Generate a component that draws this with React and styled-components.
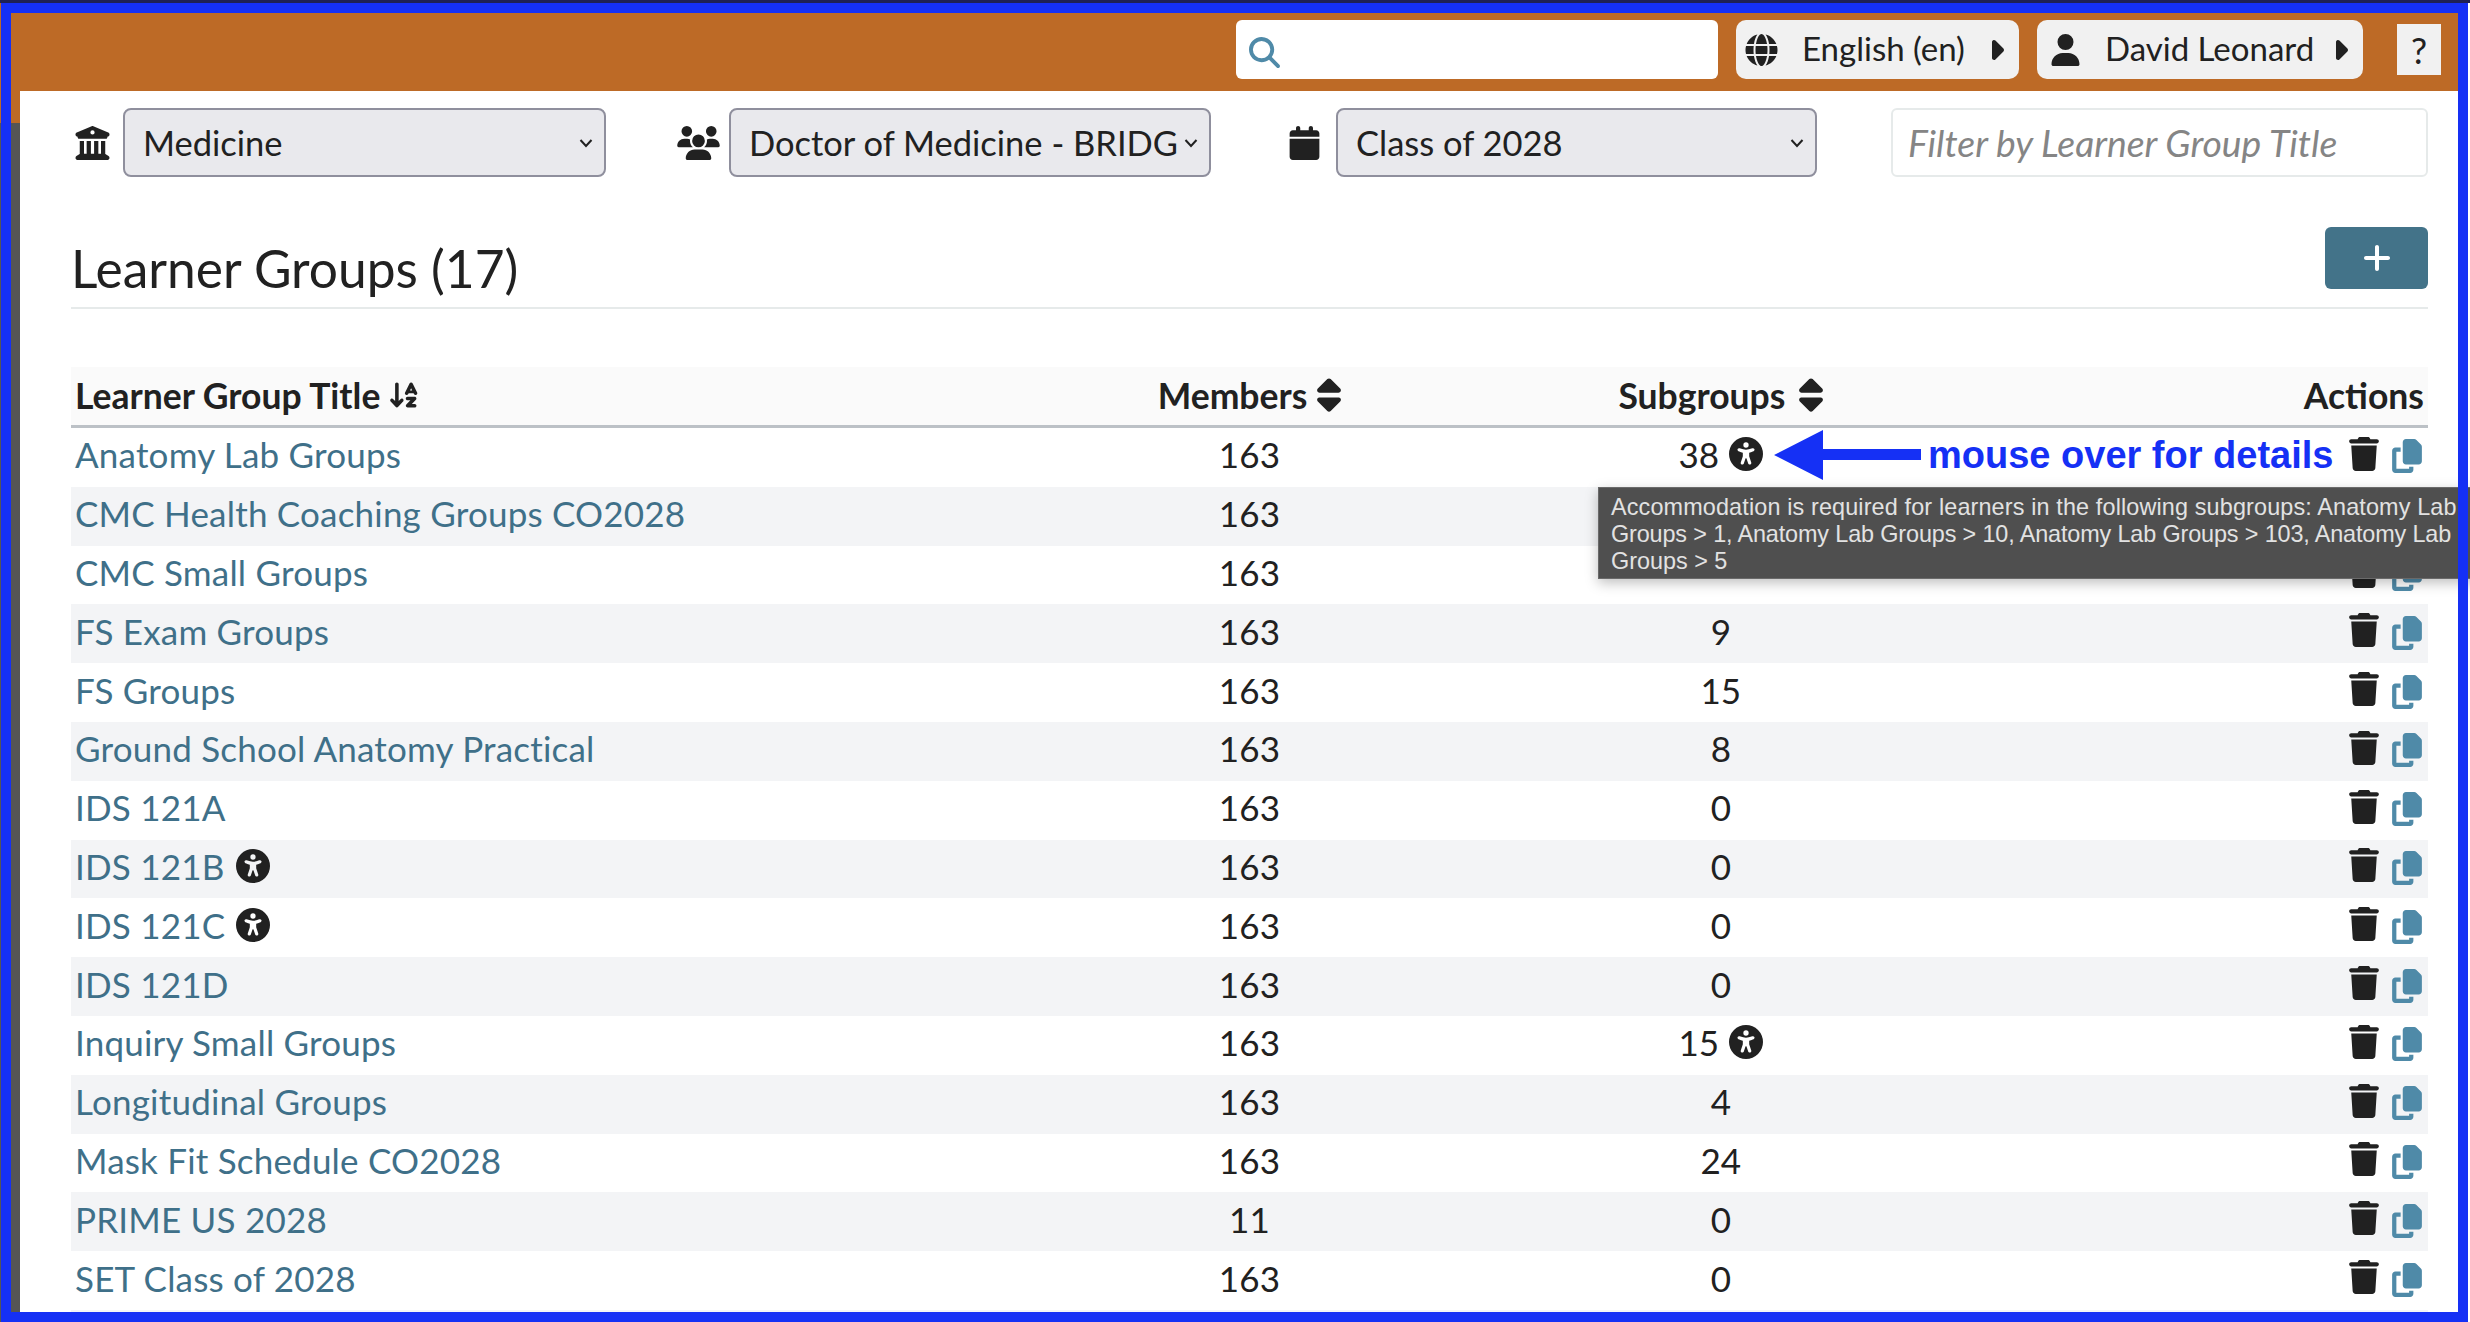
import React from 'react'
import styled, { createGlobalStyle } from 'styled-components'
import {
  FaArrowDownAZ, FaBuildingColumns, FaCalendar, FaCaretRight, FaCopy, FaGlobe,
  FaMagnifyingGlass, FaPlus, FaSort, FaTrash, FaUniversalAccess, FaUser, FaUsers,
} from 'react-icons/fa6'

const fontMain = 'Lato, "Open Sans", sans-serif'
const fontTip = '"Liberation Sans", Arial, sans-serif'
const ink = '#212121'
const link = '#3f7089'
const iconBlue = '#4f8aa8'
const frameBlue = '#1530f5'
const orange = '#bd6a26'

const GlobalStyle = createGlobalStyle`
  html, body { margin: 0; padding: 0; background: #fff; }
  * { box-sizing: border-box; }
`

const Page = styled.div`
  position: relative;
  width: 2470px;
  height: 1322px;
  padding: 3px 2px 0 1px;
  overflow: hidden;
  background:
    linear-gradient(#1f2154 3px, ${orange} 3px, ${orange} 123px, #555 123px) 0 0 / 1px 100% no-repeat,
    linear-gradient(#1f2154 3px, #fff 3px);
  font-family: ${fontMain};
  color: ${ink};
`

const Frame = styled.div`
  position: relative;
  display: flex;
  flex-direction: column;
  height: 100%;
  border-style: solid;
  border-color: ${frameBlue};
  border-width: 10px;
  overflow: hidden;
`

// right side of the frame, has to stay above the tooltip
const FrameEdge = styled.div`
  position: absolute;
  top: 3px;
  bottom: 0;
  left: 2458px;
  z-index: 3;
  width: 10px;
  background: ${frameBlue};
`

const TopBar = styled.header`
  display: flex;
  flex: none;
  align-items: flex-start;
  justify-content: flex-end;
  height: 78px;
  padding: 7px 17px 0 0;
  background: ${orange};
`

const SearchBox = styled.div`
  display: flex;
  align-items: center;
  width: 482px;
  height: 59px;
  margin-right: 18px;
  padding: 6px 0 0 13px;
  border-radius: 6px;
  background: #fff;
  color: ${iconBlue};
  font-size: 31px;
`

const MenuButton = styled.div`
  display: flex;
  align-items: center;
  width: ${p => p.$width}px;
  height: 59px;
  margin-right: ${p => p.$gap}px;
  padding-left: ${p => p.$pad}px;
  border-radius: 10px;
  background: #f1f1f1;
  font-size: 33px;
  white-space: nowrap;

  svg:first-child { flex: none; width: 33px; height: 32px; }
  svg:last-child { flex: none; width: 16px; height: 32px; margin-left: auto; margin-right: 15px; }
`

const MenuLabel = styled.span`
  margin-left: ${p => p.$left}px;
  margin-bottom: 3px;
`

const HelpButton = styled.div`
  display: flex;
  align-items: center;
  justify-content: center;
  width: 44px;
  height: 51px;
  margin-top: 4px;
  background: #f1f1f1;
  font-size: 36px;
`

const Body = styled.div`
  display: flex;
  flex: 1;
  min-height: 0;
`

const SideStrip = styled.div`
  flex: none;
  width: 9px;
  background: linear-gradient(${orange} 32px, #555 32px);
`

const Content = styled.main`
  flex: 1;
  min-width: 0;
  padding: 17px 30px 0 51px;
`

const FilterRow = styled.div`
  display: flex;
  align-items: center;
  height: 69px;
`

const FilterIcon = styled.span`
  display: flex;
  flex: none;
  justify-content: center;
  width: ${p => p.$width}px;
  margin-left: ${p => p.$left}px;
  margin-right: ${p => p.$right}px;

  svg { width: 100%; height: 34px; }
`

const SelectBox = styled.div`
  display: flex;
  flex: none;
  align-items: center;
  width: ${p => p.$width}px;
  height: 69px;
  padding: 0 11px 0 18px;
  border: 2px solid #8f8f9d;
  border-radius: 8px;
  background: #e9e9ed;
  font-size: 34.5px;
  white-space: nowrap;
`

const SelectText = styled.span`
  flex: 1;
  min-width: 0;
`

const Chevron = styled.svg`
  flex: none;
  width: 14px;
  height: 10px;
  margin-left: 6px;
`

const FilterInput = styled.div`
  display: flex;
  align-items: center;
  width: 537px;
  height: 69px;
  margin-left: auto;
  padding-left: 15px;
  border: 2px solid #e6eaea;
  border-radius: 6px;
  color: #858585;
  font-size: 37.3px;
  font-style: italic;
`

const TitleRow = styled.div`
  display: flex;
  align-items: flex-end;
  justify-content: space-between;
  height: 132px;
  padding-bottom: 18px;
  border-bottom: 2px solid #e6eaea;
`

const Title = styled.h2`
  margin: 0 0 -9px;
  font-size: 51.5px;
  font-weight: 400;
  line-height: 60px;
`

const AddButton = styled.div`
  display: flex;
  align-items: center;
  justify-content: center;
  width: 103px;
  height: 62px;
  border-radius: 6px;
  background: #437389;
  color: #fff;
  font-size: 32px;
`

const Table = styled.div`
  margin-top: 58px;
`

const HeadRow = styled.div`
  display: grid;
  grid-template-columns: 40% 20% 20% 20%;
  align-items: center;
  height: 61px;
  padding-bottom: 2px;
  border-bottom: 3px solid #bcc1c6;
  background: #fafafa;
  font-size: 35.5px;
  font-weight: 700;
`

const Row = styled.div`
  display: grid;
  grid-template-columns: 40% 20% 20% 20%;
  align-items: center;
  height: 58.8px;
  background: ${p => (p.$striped ? '#f3f4f6' : '#fff')};
  font-size: 35px;
  letter-spacing: 0.2px;
`

const Cell = styled.div`
  display: flex;
  align-items: center;
  justify-content: ${p => p.$align || 'center'};
  gap: ${p => p.$gap || 10}px;
  padding: 0 ${p => (p.$align ? '4px' : '0')} ${p => p.$lift || 0}px;
  white-space: nowrap;
`

const GroupLink = styled.span`
  color: ${link};
`

const AccessIcon = styled(FaUniversalAccess)`
  flex: none;
  width: 34px;
  height: 34px;
`

const SortIcon = styled(FaSort)`
  flex: none;
  width: 24px;
  height: 38px;
`

const AlphaIcon = styled(FaArrowDownAZ)`
  flex: none;
  width: 32px;
  height: 32px;
`

const TrashIcon = styled(FaTrash)`
  width: 30px;
  height: 34px;
  margin-bottom: 7px;
`

const CopyIcon = styled(FaCopy)`
  width: 30px;
  height: 34px;
  margin-bottom: 2px;
  color: ${iconBlue};
`

const ActionCell = styled.div`
  display: flex;
  align-items: center;
  justify-content: flex-end;
  gap: 13px;
  padding-right: 6px;
`

const Tooltip = styled.div`
  position: absolute;
  left: 1598px;
  top: 487px;
  z-index: 2;
  width: 900px;
  height: 92px;
  padding: 6px 12px;
  border: 1px solid #6a6a6a;
  background: #4f4f4f;
  box-shadow: 0 4px 12px rgba(0, 0, 0, 0.25);
  color: #e2e2e2;
  font-family: ${fontTip};
  font-size: 23.4px;
  line-height: 27px;
`

const TipLine = styled.div`
  letter-spacing: ${p => p.$spacing || 0}px;
  white-space: nowrap;
`

const Callout = styled.div`
  position: absolute;
  left: 1763px;
  top: 417px;
  display: flex;
  align-items: center;
  gap: 7px;
  color: ${frameBlue};
  font-family: ${fontTip};
  font-size: 38px;
  font-weight: 700;
  white-space: nowrap;
`

const groups = [
  ['Anatomy Lab Groups', '163', '38', false, true],
  ['CMC Health Coaching Groups CO2028', '163', '', false, false],
  ['CMC Small Groups', '163', '', false, false],
  ['FS Exam Groups', '163', '9', false, false],
  ['FS Groups', '163', '15', false, false],
  ['Ground School Anatomy Practical', '163', '8', false, false],
  ['IDS 121A', '163', '0', false, false],
  ['IDS 121B', '163', '0', true, false],
  ['IDS 121C', '163', '0', true, false],
  ['IDS 121D', '163', '0', false, false],
  ['Inquiry Small Groups', '163', '15', false, true],
  ['Longitudinal Groups', '163', '4', false, false],
  ['Mask Fit Schedule CO2028', '163', '24', false, false],
  ['PRIME US 2028', '11', '0', false, false],
  ['SET Class of 2028', '163', '0', false, false],
]

function DownChevron() {
  return (
    <Chevron viewBox="0 0 14 10">
      <path d="M1.5 2 L7 8 L12.5 2" fill="none" stroke={ink} strokeWidth="2" />
    </Chevron>
  )
}

export default function App() {
  return (
    <Page>
      <GlobalStyle />
      <Frame>
        <TopBar>
          <SearchBox><FaMagnifyingGlass /></SearchBox>
          <MenuButton $width={283} $gap={18} $pad={9}>
            <FaGlobe /><MenuLabel $left={24}>English (en)</MenuLabel><FaCaretRight />
          </MenuButton>
          <MenuButton $width={326} $gap={34} $pad={12}>
            <FaUser /><MenuLabel $left={23}>David Leonard</MenuLabel><FaCaretRight />
          </MenuButton>
          <HelpButton>?</HelpButton>
        </TopBar>
        <Body>
          <SideStrip />
          <Content>
            <FilterRow>
              <FilterIcon $width={35} $left={4} $right={13}><FaBuildingColumns /></FilterIcon>
              <SelectBox $width={483}><SelectText>Medicine</SelectText><DownChevron /></SelectBox>
              <FilterIcon $width={43} $left={71} $right={9}><FaUsers /></FilterIcon>
              <SelectBox $width={482}><SelectText>Doctor of Medicine - BRIDG</SelectText><DownChevron /></SelectBox>
              <FilterIcon $width={31} $left={78} $right={16}><FaCalendar /></FilterIcon>
              <SelectBox $width={481}><SelectText>Class of 2028</SelectText><DownChevron /></SelectBox>
              <FilterInput>Filter by Learner Group Title</FilterInput>
            </FilterRow>
            <TitleRow>
              <Title>Learner Groups (17)</Title>
              <AddButton><FaPlus /></AddButton>
            </TitleRow>
            <Table>
              <HeadRow>
                <Cell $align="flex-start" $gap={8}>Learner Group Title <AlphaIcon /></Cell>
                <Cell $gap={10}>Members <SortIcon /></Cell>
                <Cell $gap={14}>Subgroups <SortIcon /></Cell>
                <Cell $align="flex-end">Actions</Cell>
              </HeadRow>
              {groups.map((g, i) => (
                <Row key={g[0]} $striped={i % 2 === 1}>
                  <Cell $align="flex-start" $gap={11} $lift={6}>
                    <GroupLink>{g[0]}</GroupLink>
                    {g[3] && <AccessIcon />}
                  </Cell>
                  <Cell $lift={6}>{g[1]}</Cell>
                  <Cell $lift={6}>
                    {g[2]}
                    {g[4] && <AccessIcon />}
                  </Cell>
                  <ActionCell><TrashIcon /><CopyIcon /></ActionCell>
                </Row>
              ))}
              <Row $striped />
            </Table>
          </Content>
        </Body>
        <Callout>
          <svg width="147" height="50" viewBox="0 0 147 50">
            <path d="M0 25 L49 0 V19 H147 V30 H49 V50 Z" fill={frameBlue} />
          </svg>
          mouse over for details
        </Callout>
      </Frame>
      <Tooltip>
        <TipLine $spacing={0.14}>Accommodation is required for learners in the following subgroups: Anatomy Lab</TipLine>
        <TipLine $spacing={-0.13}>{'Groups > 1, Anatomy Lab Groups > 10, Anatomy Lab Groups > 103, Anatomy Lab'}</TipLine>
        <TipLine>{'Groups > 5'}</TipLine>
      </Tooltip>
      <FrameEdge />
    </Page>
  )
}
